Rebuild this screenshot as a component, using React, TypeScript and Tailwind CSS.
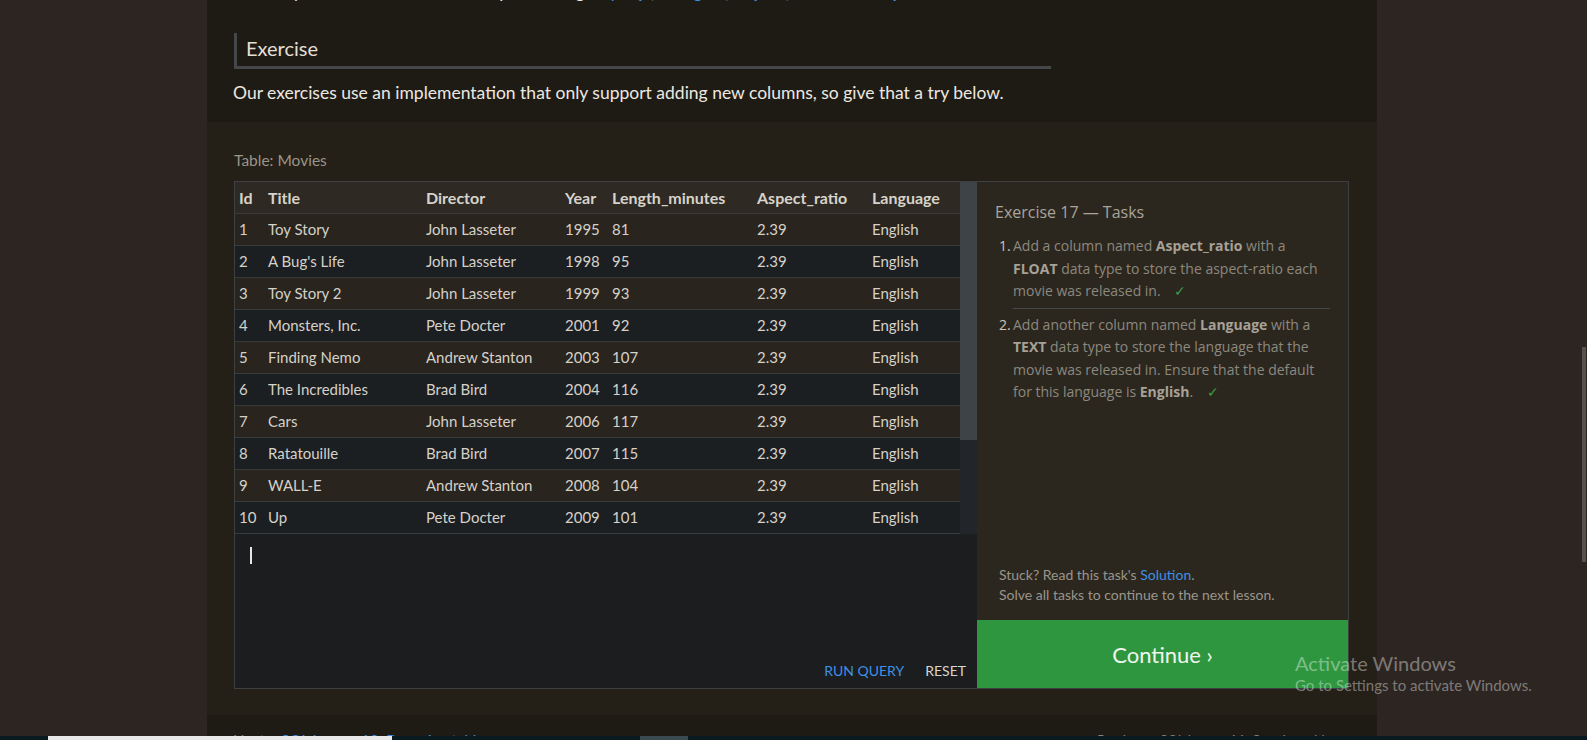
import React from "react";

type Movie = [number, string, string, number, number];

const movies: Movie[] = [
  [1, "Toy Story", "John Lasseter", 1995, 81],
  [2, "A Bug's Life", "John Lasseter", 1998, 95],
  [3, "Toy Story 2", "John Lasseter", 1999, 93],
  [4, "Monsters, Inc.", "Pete Docter", 2001, 92],
  [5, "Finding Nemo", "Andrew Stanton", 2003, 107],
  [6, "The Incredibles", "Brad Bird", 2004, 116],
  [7, "Cars", "John Lasseter", 2006, 117],
  [8, "Ratatouille", "Brad Bird", 2007, 115],
  [9, "WALL-E", "Andrew Stanton", 2008, 104],
  [10, "Up", "Pete Docter", 2009, 101],
];

const rowGrid = "grid grid-cols-[28px_158px_139px_47px_145px_115px_93px] h-[32px] items-center border-b border-[#383a3b]";

const Check = () => <span className="ml-[10px] text-[#3d9b45]">✓</span>;

const MovieTable = () => (
  <div className="w-[725px]">
    <div className={`${rowGrid} bg-[#2e2a23] text-[16px] font-bold text-[#d8d3ca]`}>
      <span className="pl-[4px]">Id</span>
      <span className="pl-[5px]">Title</span>
      <span className="pl-[5px]">Director</span>
      <span className="pl-[5px]">Year</span>
      <span className="pl-[5px]">Length_minutes</span>
      <span className="pl-[5px]">Aspect_ratio</span>
      <span className="pl-[5px]">Language</span>
    </div>
    {movies.map(([id, title, director, year, len]) => (
      <div
        key={id}
        className={`${rowGrid} text-[15px] text-[#d5d1c9] ${id % 2 === 1 ? "bg-[#29241d]" : "bg-[#1c1f22]"}`}
      >
        <span className="pl-[4px]">{id}</span>
        <span className="pl-[5px]">{title}</span>
        <span className="pl-[5px]">{director}</span>
        <span className="pl-[5px]">{year}</span>
        <span className="pl-[5px]">{len}</span>
        <span className="pl-[5px]">2.39</span>
        <span className="pl-[5px]">English</span>
      </div>
    ))}
  </div>
);

const TaskPanel = () => (
  <div className="flex w-[371px] flex-col bg-[#2b271f]">
    <div className="px-[18px] pt-[18px]">
      <h3 className="font-['Open_Sans',sans-serif] text-[16px] leading-[24px] text-[#a9a49a]">
        Exercise 17 — Tasks
      </h3>
      <ol className="mt-[11px] font-['Open_Sans',sans-serif] text-[14px] leading-[22.5px] text-[#8d887e]">
        <li className="ml-[4px] flex">
          <span className="w-[14px] shrink-0 text-[#cbc6bd]">1.</span>
          <div className="w-[328px] border-b border-[#46494c] pb-[5px] whitespace-nowrap">
            Add a column named <b className="text-[#a7a196]">Aspect_ratio</b> with a
            <br />
            <b className="text-[#a7a196]">FLOAT</b> data type to store the aspect-ratio each
            <br />
            movie was released in. <Check />
          </div>
        </li>
        <li className="ml-[4px] mt-[5px] flex">
          <span className="w-[14px] shrink-0 text-[#cbc6bd]">2.</span>
          <div className="w-[328px] whitespace-nowrap">
            Add another column named <b className="text-[#a7a196]">Language</b> with a
            <br />
            <b className="text-[#a7a196]">TEXT</b> data type to store the language that the
            <br />
            movie was released in. Ensure that the default
            <br />
            for this language is <b className="text-[#a7a196]">English</b>. <Check />
          </div>
        </li>
      </ol>
    </div>
    <div className="mt-auto px-[22px] pb-[15px] text-[14px] leading-[20px] text-[#9a958b]">
      <p>
        Stuck? Read this task's <a className="text-[#3f90e2]">Solution</a>.
      </p>
      <p>Solve all tasks to continue to the next lesson.</p>
    </div>
    <button className="flex h-[68px] items-center justify-center bg-[#2e963f] text-[22px] text-[#eef6ee]">
      Continue ›
    </button>
  </div>
);

export default function App() {
  return (
    <div className="flex h-[740px] w-full flex-col overflow-hidden bg-[#2d2521] font-['Lato',sans-serif]">
      <div className="relative flex h-[736px] shrink-0 overflow-hidden">
        <div className="w-[207px] shrink-0" />

        <main className="flex w-[1170px] shrink-0 flex-col bg-[#1e1b15]">
          <p className="-mt-[21px] shrink-0 whitespace-nowrap px-[26px] text-[17.5px] leading-[26px] text-[#ece8e0]">
            consult your database docs before proceeding: <a className="text-[#3f90e2]">MySQL</a>,{" "}
            <a className="text-[#3f90e2]">Postgres</a>, <a className="text-[#3f90e2]">SQLite</a>,{" "}
            <a className="text-[#3f90e2]">Microsoft SQL Server</a>.
          </p>

          <div className="ml-[27px] mt-[28px] flex h-[36px] w-[817px] shrink-0 items-start border-b-[3px] border-l-[3px] border-[#45474b] pl-[9px] pt-[3px] text-[20px] leading-[24px] text-[#e4dfd6]">
            Exercise
          </div>

          <p className="mt-[11px] shrink-0 px-[26px] text-[17.5px] leading-[26px] text-[#ece8e0]">
            Our exercises use an implementation that only support adding new columns, so give that a try below.
          </p>

          <section className="mt-[16px] shrink-0 bg-[#241f17] px-[27px] pb-[26px] pt-[28px]">
            <div className="text-[15.5px] leading-[20px] text-[#9b9589]">Table: Movies</div>
            <div className="mt-[11px] flex h-[508px] w-[1115px] border border-[#3d4043]">
              <div className="flex w-[742px] flex-col">
                <div className="flex">
                  <MovieTable />
                  <div className="flex w-[17px] flex-col bg-[#22252a]">
                    <div className="h-[258px] bg-[#3e4348]" />
                  </div>
                </div>
                <div className="flex flex-1 flex-col bg-[#1b1d1f] pl-[15px] pr-[11px] pt-[13px] pb-[7px]">
                  <div className="h-[17px] w-[2px] bg-[#e6e6e6]" />
                  <div className="mt-auto flex justify-end gap-[21px] text-[14px] leading-[20px]">
                    <button className="text-[#3f90e6]">RUN QUERY</button>
                    <button className="text-[#d8d4cc]">RESET</button>
                  </div>
                </div>
              </div>
              <TaskPanel />
            </div>
          </section>

          <footer className="flex shrink-0 justify-between pl-[26px] pr-[40px] pt-[14px] text-[15px] leading-[22px] text-[#8a857c]">
            <p>
              Next – <a className="text-[#3f90e2]">SQL Lesson 18: Dropping tables</a>
            </p>
            <p className="text-[13px]">Previous – SQL Lesson 16: Creating tables</p>
          </footer>
        </main>

        <div className="flex flex-1 justify-end pr-[1px]">
          <div className="mt-[347px] h-[215px] w-[4px] bg-[#56514d]" />
        </div>

        <div className="absolute left-[1295px] top-[651px] text-white/40">
          <div className="text-[20px] leading-[24px]">Activate Windows</div>
          <div className="text-[15px] leading-[20px]">Go to Settings to activate Windows.</div>
        </div>
      </div>

      <div className="flex h-[4px] shrink-0 bg-[#0a1a21]">
        <div className="ml-[48px] w-[344px] bg-[#e9e9e9]" />
        <div className="ml-[248px] w-[48px] bg-[#3b4a50]" />
      </div>
    </div>
  );
}
